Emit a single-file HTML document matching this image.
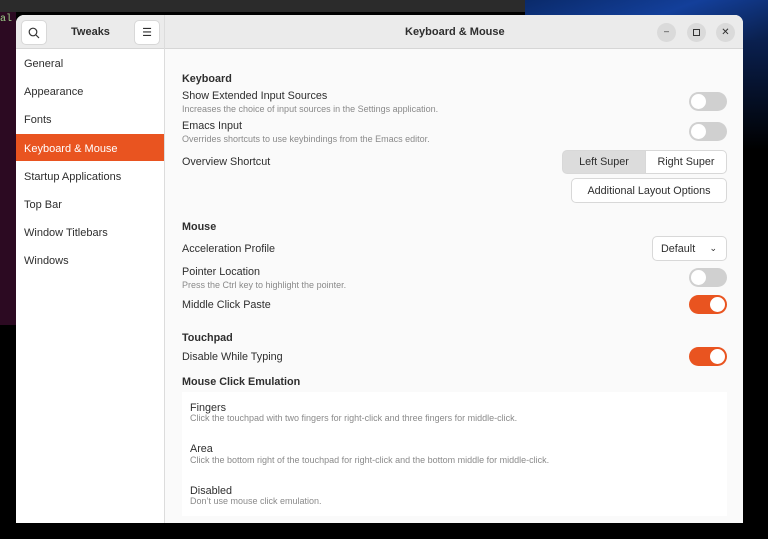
<!DOCTYPE html>
<html><head><style>
*{margin:0;padding:0;box-sizing:border-box}
body{width:768px;height:539px;background:#000;position:relative;overflow:hidden;font-family:"Liberation Sans",sans-serif;color:#2e2e2e}
.a{position:absolute;white-space:nowrap}
.t{font-size:10.8px;margin-top:1px}
.d{font-size:9px;color:#8a8a8a;margin-top:1px}
.h{font-size:10.8px;font-weight:bold;margin-top:1px}
.sw{position:absolute;width:38px;height:19px;border-radius:10px;background:#d0d0d0}
.sw::after{content:"";position:absolute;left:2px;top:2px;width:15px;height:15px;border-radius:50%;background:#fff}
.sw.on{background:#e95420}
.sw.on::after{left:21px}
.btn{position:absolute;border:1px solid #d8d8d8;border-radius:5px;background:#fff;font-size:10.8px;display:flex;align-items:center;justify-content:center}
.si{position:absolute;left:24px;font-size:11px;color:#2e2e2e;margin-top:1px}
</style></head><body>
<div class="a" style="left:0;top:0;width:525px;height:12px;background:#2b2b2b"></div>
<div class="a" style="left:0;top:12px;width:16px;height:313px;background:#2c0a22"></div>
<div class="a" style="left:0;top:14px;font:10px 'Liberation Mono',monospace;color:#9fd08a">al</div>
<div class="a" style="left:525px;top:0;width:243px;height:40px;background:linear-gradient(160deg,#0a2a6a,#133f9a 50%,#0a1f4a)"></div>
<div class="a" style="left:743px;top:40px;width:25px;height:110px;background:linear-gradient(#0a2050,#000)"></div>

<div class="a" style="left:16px;top:15px;width:727px;height:508px;background:#fafafa;border-radius:8px 8px 0 0;overflow:hidden">
  <div class="a" style="left:0;top:0;width:727px;height:34px;background:#ebebeb;border-bottom:1px solid #d6d6d6"></div>
  <div class="a" style="left:148px;top:0;width:1px;height:508px;background:#dcdcdc"></div>
  <div class="a" style="left:0;top:34px;width:148px;height:474px;background:#fff"></div>
  <div class="btn" style="left:5px;top:5px;width:26px;height:25px"><svg width="12" height="12" viewBox="0 0 12 12"><circle cx="5" cy="5" r="3.8" fill="none" stroke="#333" stroke-width="1.2"/><path d="M8 8l3 3" stroke="#333" stroke-width="1.2"/></svg></div>
  <div class="a" style="left:55px;top:11px;font-size:11px;font-weight:bold">Tweaks</div>
  <div class="btn" style="left:118px;top:5px;width:26px;height:25px;font-size:11px">☰</div>
  <div class="a" style="left:389px;top:11px;font-size:11px;font-weight:bold">Keyboard &amp; Mouse</div>
  <div class="a" style="left:641px;top:8px;width:19px;height:19px;border-radius:50%;background:#dadada;font-size:9px;text-align:center;line-height:17px">–</div>
  <div class="a" style="left:671px;top:8px;width:19px;height:19px;border-radius:50%;background:#dadada;"><div style="position:absolute;left:6px;top:6px;width:7px;height:7px;border:1px solid #333"></div></div>
  <div class="a" style="left:700px;top:8px;width:19px;height:19px;border-radius:50%;background:#dadada;font-size:10px;text-align:center;line-height:19px">✕</div>
  <div class="a" style="left:0;top:119px;width:148px;height:27px;background:#e95420"></div>
</div>
<div class="si" style="top:57px">General</div>
<div class="si" style="top:85px">Appearance</div>
<div class="si" style="top:113px">Fonts</div>
<div class="si" style="top:142px;color:#fff">Keyboard &amp; Mouse</div>
<div class="si" style="top:170px">Startup Applications</div>
<div class="si" style="top:198px">Top Bar</div>
<div class="si" style="top:226px">Window Titlebars</div>
<div class="si" style="top:254px">Windows</div>

<div class="a h" style="left:182px;top:72px">Keyboard</div>
<div class="a t" style="left:182px;top:89px">Show Extended Input Sources</div>
<div class="a d" style="left:182px;top:103px">Increases the choice of input sources in the Settings application.</div>
<div class="a t" style="left:182px;top:119px">Emacs Input</div>
<div class="a d" style="left:182px;top:133px">Overrides shortcuts to use keybindings from the Emacs editor.</div>
<div class="a t" style="left:182px;top:155px">Overview Shortcut</div>
<div class="sw" style="left:689px;top:92px"></div>
<div class="sw" style="left:689px;top:122px"></div>
<div class="btn" style="left:562px;top:150px;width:84px;height:24px;background:#dcdcdc;border-radius:5px 0 0 5px">Left Super</div>
<div class="btn" style="left:645px;top:150px;width:82px;height:24px;border-radius:0 5px 5px 0">Right Super</div>
<div class="btn" style="left:571px;top:178px;width:156px;height:25px">Additional Layout Options</div>

<div class="a h" style="left:182px;top:220px">Mouse</div>
<div class="a t" style="left:182px;top:242px">Acceleration Profile</div>
<div class="btn" style="left:652px;top:236px;width:75px;height:25px;justify-content:flex-start;padding-left:8px">Default<span style="position:absolute;right:9px;font-size:9px">⌄</span></div>
<div class="a t" style="left:182px;top:265px">Pointer Location</div>
<div class="a d" style="left:182px;top:279px">Press the Ctrl key to highlight the pointer.</div>
<div class="sw" style="left:689px;top:268px"></div>
<div class="a t" style="left:182px;top:298px">Middle Click Paste</div>
<div class="sw on" style="left:689px;top:295px"></div>

<div class="a h" style="left:182px;top:331px">Touchpad</div>
<div class="a t" style="left:182px;top:350px">Disable While Typing</div>
<div class="sw on" style="left:689px;top:347px"></div>
<div class="a h" style="left:182px;top:375px">Mouse Click Emulation</div>
<div class="a" style="left:182px;top:392px;width:545px;height:124px;background:#fff"></div>
<div class="a t" style="left:190px;top:401px">Fingers</div>
<div class="a d" style="left:190px;top:412px">Click the touchpad with two fingers for right-click and three fingers for middle-click.</div>
<div class="a t" style="left:190px;top:442px">Area</div>
<div class="a d" style="left:190px;top:454px">Click the bottom right of the touchpad for right-click and the bottom middle for middle-click.</div>
<div class="a t" style="left:190px;top:484px">Disabled</div>
<div class="a d" style="left:190px;top:495px">Don’t use mouse click emulation.</div>
</body></html>
